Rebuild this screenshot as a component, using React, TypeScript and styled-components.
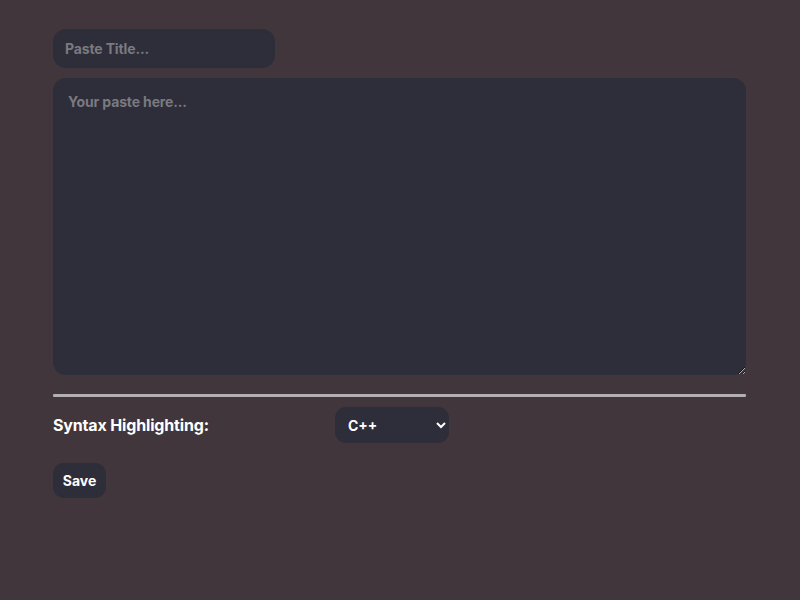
import React from "react";
import styled, { createGlobalStyle } from "styled-components";

const Global = createGlobalStyle`
  html, body { margin: 0; padding: 0; background: #41363b; }
  body { font-family: Inter, "Noto Sans", sans-serif; color: #fff; min-height: 600px; }
  * { box-sizing: border-box; }
`;

const Page = styled.main`
  padding: 29px 54px 0 53px;
  display: flex;
  flex-direction: column;
`;

const TitleInput = styled.input`
  width: 222px;
  height: 39px;
  border: none;
  outline: none;
  border-radius: 13px;
  background: #2e2d3a;
  color: #fff;
  font-family: Inter, sans-serif;
  font-weight: 700;
  font-size: 14px;
  letter-spacing: -0.01em;
  padding: 0 12px;
  &::placeholder { color: #7a7a7f; }
`;

const Body = styled.textarea`
  margin-top: 10px;
  width: 100%;
  height: 297px;
  border: none;
  outline: none;
  border-radius: 13px;
  background: #2e2d3a;
  color: #fff;
  font-family: Inter, sans-serif;
  font-weight: 700;
  font-size: 14px;
  letter-spacing: -0.01em;
  padding: 15px 15px;
  resize: vertical;
  display: block;
  &::placeholder { color: #7a7a7f; }
`;

const Rule = styled.div`
  margin-top: 19px;
  height: 3px;
  background: #b3aeaf;
  border-radius: 1px;
`;

const Row = styled.div`
  margin-top: 10px;
  display: flex;
  align-items: center;
`;

const Label = styled.label`
  width: 282px;
  font-weight: 700;
  font-size: 16px;
  letter-spacing: -0.01em;
  color: #fff;
`;

const Select = styled.select`
  width: 114px;
  height: 36px;
  border: none;
  outline: none;
  border-radius: 11px;
  background: #2e2d3a;
  color: #fff;
  font-family: Inter, sans-serif;
  font-weight: 700;
  font-size: 14px;
  padding: 0 8px 0 9px;
`;

const SaveButton = styled.button`
  margin-top: 20px;
  align-self: flex-start;
  width: 53px;
  height: 35px;
  border: none;
  border-radius: 11px;
  background: #2e2d3a;
  color: #fff;
  font-family: Inter, sans-serif;
  font-weight: 700;
  font-size: 14px;
  padding: 0;
  cursor: pointer;
`;

export default function App() {
  return (
    <>
      <Global />
      <Page>
        <TitleInput placeholder="Paste Title..." />
        <Body placeholder="Your paste here..." />
        <Rule />
        <Row>
          <Label htmlFor="lang">Syntax Highlighting:</Label>
          <Select id="lang" defaultValue="cpp">
            <option value="cpp">C++</option>
            <option value="c">C</option>
            <option value="py">Python</option>
            <option value="js">JavaScript</option>
          </Select>
        </Row>
        <SaveButton>Save</SaveButton>
      </Page>
    </>
  );
}
